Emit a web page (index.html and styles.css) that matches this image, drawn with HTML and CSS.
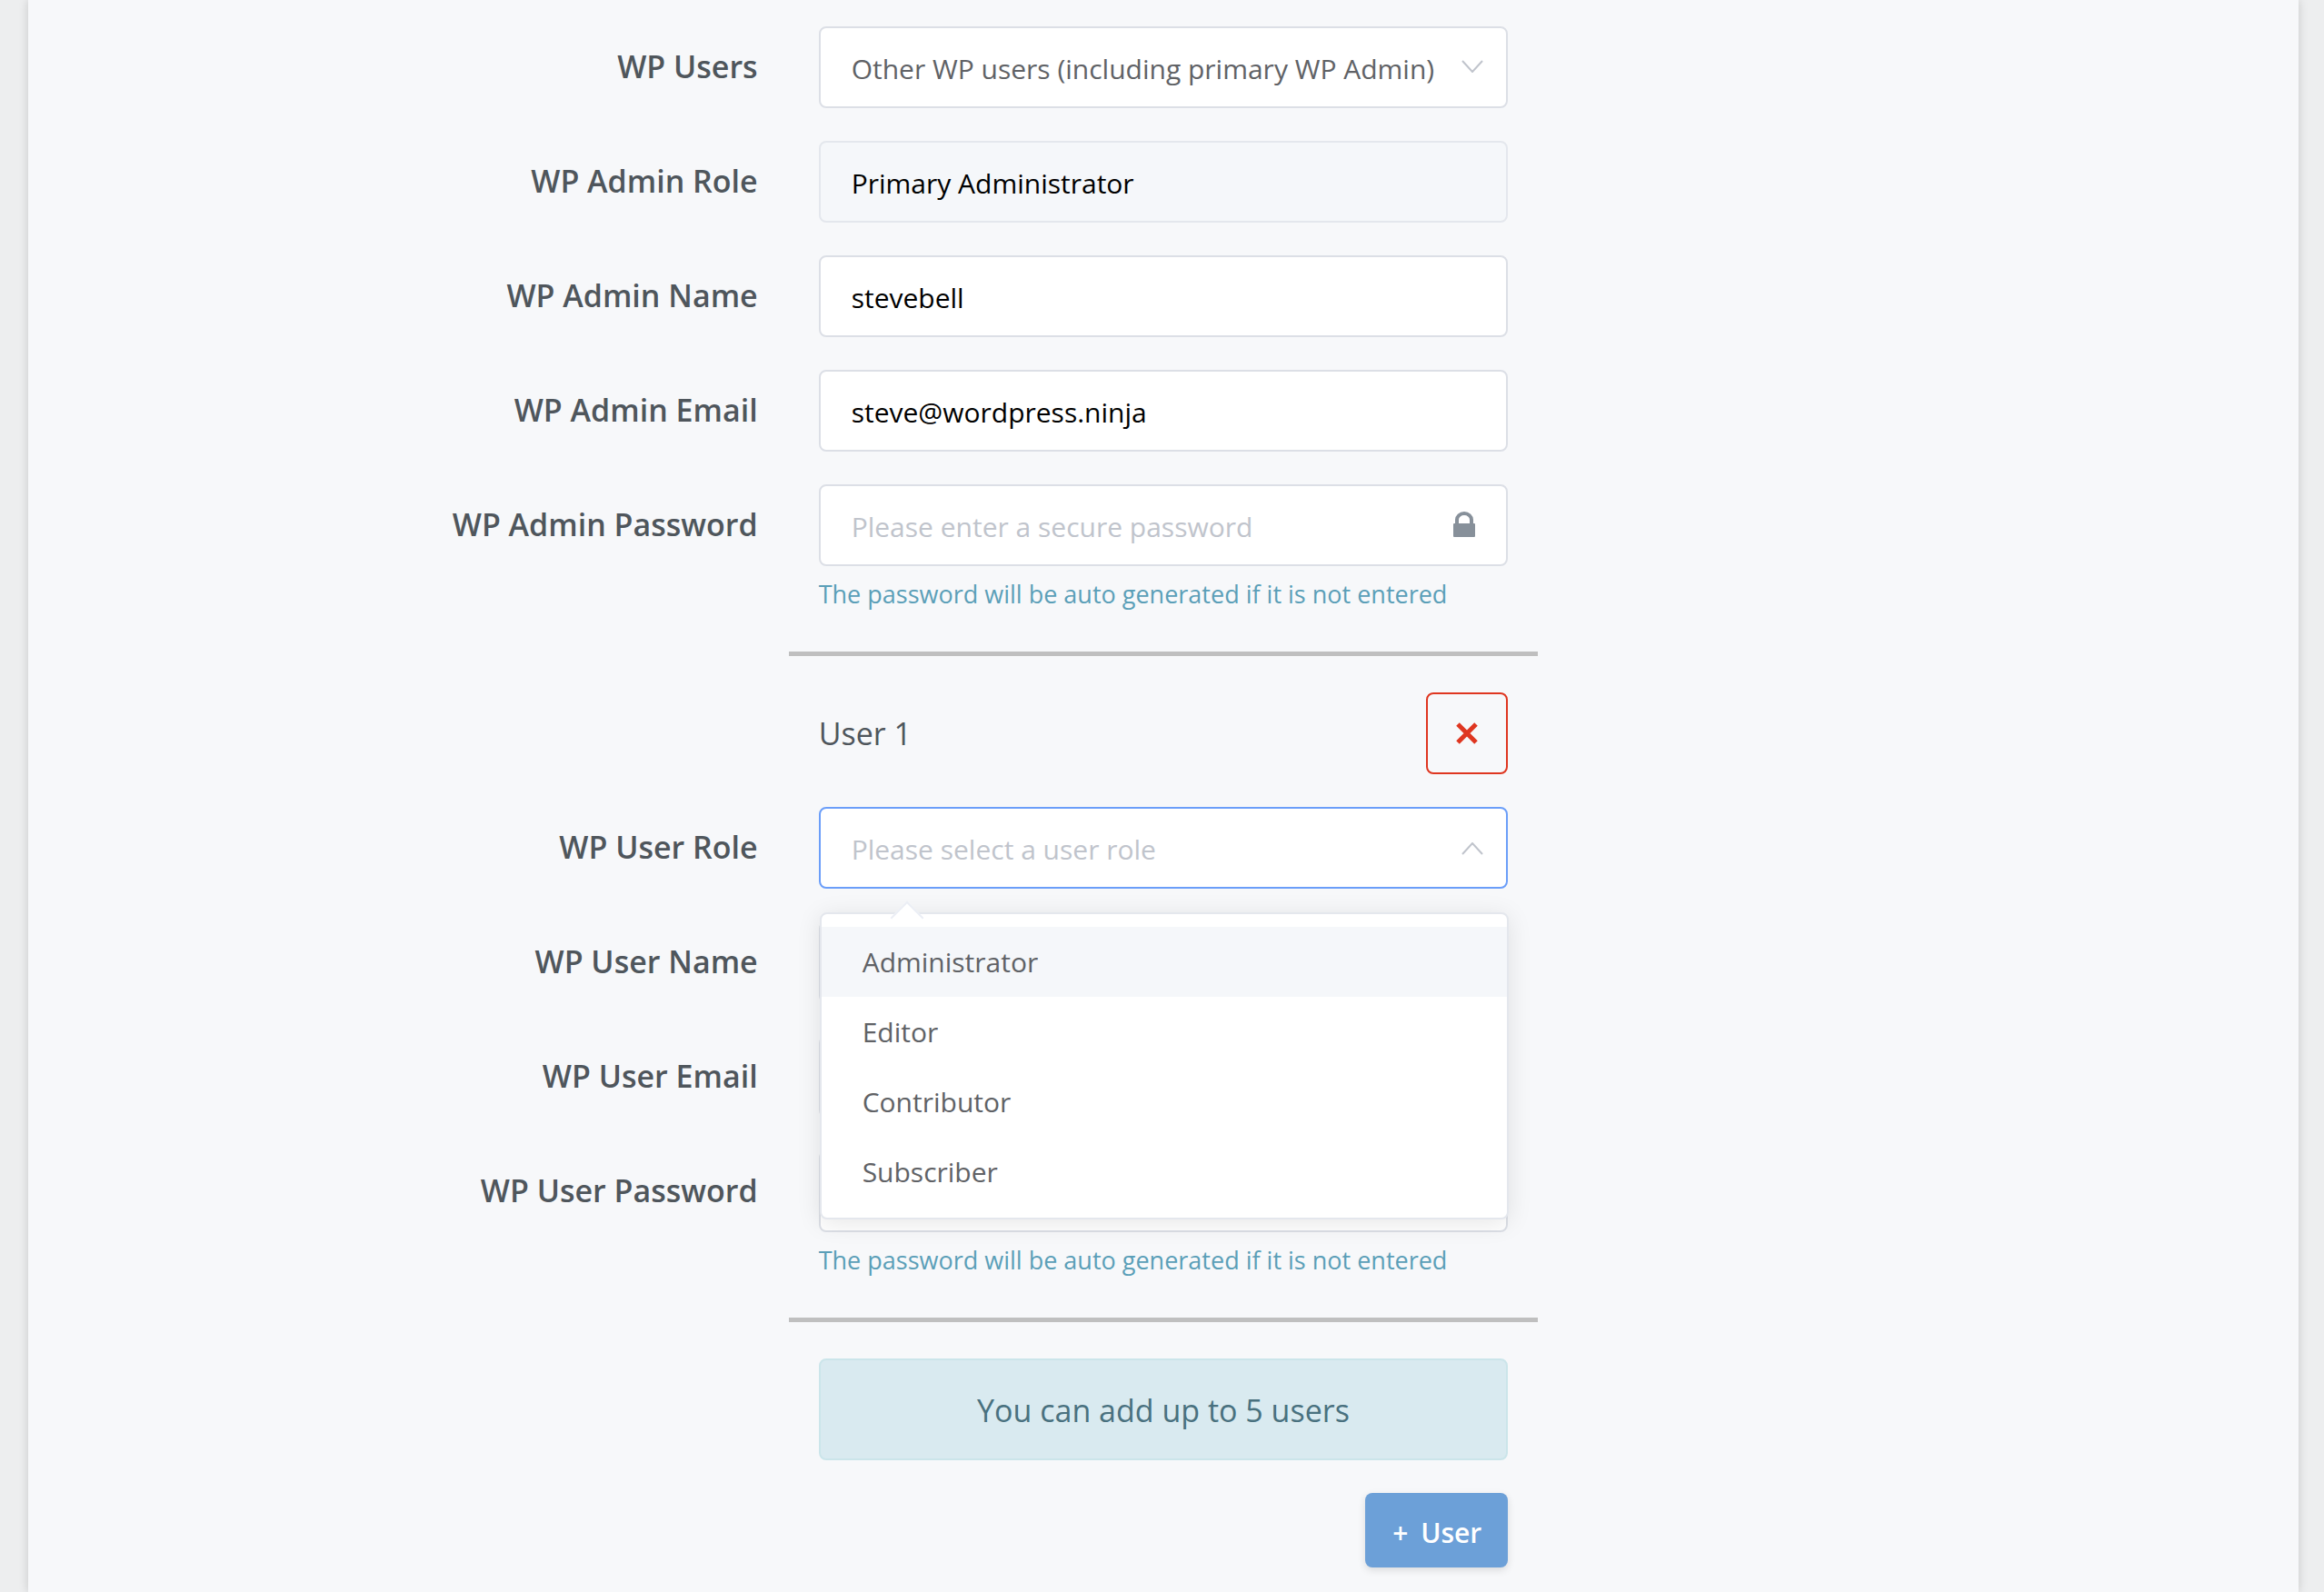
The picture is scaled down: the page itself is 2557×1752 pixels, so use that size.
FILE: index.html
```html
<!DOCTYPE html>
<html lang="en">
<head>
    <meta charset="UTF-8">
    <meta name="viewport" content="width=device-width, initial-scale=1.0">
    <title>WP Users</title>
    <link rel="stylesheet" href="styles.css">
</head>
<body>
    <form class="card">
        <!-- Primary admin -->
        <div class="form-row">
            <label class="form-label" for="wpUsers">WP Users</label>
            <div class="form-field">
                <select class="form-input form-select" id="wpUsers">
                    <option>Other WP users (including primary WP Admin)</option>
                </select>
                <svg class="field-icon chevron" viewBox="0 0 24 14"><path d="M1 1l11 12L23 1"/></svg>
            </div>
        </div>
        <div class="form-row">
            <label class="form-label" for="adminRole">WP Admin Role</label>
            <div class="form-field">
                <input class="form-input" id="adminRole" type="text" value="Primary Administrator" disabled>
            </div>
        </div>
        <div class="form-row">
            <label class="form-label" for="adminName">WP Admin Name</label>
            <div class="form-field">
                <input class="form-input" id="adminName" type="text" value="stevebell">
            </div>
        </div>
        <div class="form-row">
            <label class="form-label" for="adminEmail">WP Admin Email</label>
            <div class="form-field">
                <input class="form-input" id="adminEmail" type="email" value="steve@wordpress.ninja">
            </div>
        </div>
        <div class="form-row with-help">
            <label class="form-label" for="adminPassword">WP Admin Password</label>
            <div class="form-field">
                <input class="form-input" id="adminPassword" type="password" placeholder="Please enter a secure password">
                <svg class="field-icon lock" viewBox="0 0 24 28"><path d="M2 13V9a10 9 0 0 1 20 0v4h1a1 1 0 0 1 1 1v13a1 1 0 0 1-1 1H1a1 1 0 0 1-1-1V14a1 1 0 0 1 1-1zM6 13h12V9a6 5 0 0 0-12 0z"/></svg>
                <p class="help-text">The password will be auto generated if it is not entered</p>
            </div>
        </div>

        <hr class="divider">

        <!-- Additional user -->
        <div class="form-row">
            <div class="form-field user-header">
                <span class="user-title">User 1</span>
                <button class="remove-button" type="button" aria-label="Remove user">
                    <svg viewBox="0 0 24 24"><path d="M2 2l20 20M22 2L2 22"/></svg>
                </button>
            </div>
        </div>
        <div class="form-row">
            <label class="form-label" for="userRole">WP User Role</label>
            <div class="form-field">
                <select class="form-input form-select placeholder open" id="userRole">
                    <option value="">Please select a user role</option>
                    <option>Administrator</option>
                    <option>Editor</option>
                    <option>Contributor</option>
                    <option>Subscriber</option>
                </select>
                <svg class="field-icon chevron" viewBox="0 0 24 14"><path d="M1 13L12 1l11 12"/></svg>
                <ul class="dropdown" role="listbox">
                    <li class="dropdown-item hover" role="option">Administrator</li>
                    <li class="dropdown-item" role="option">Editor</li>
                    <li class="dropdown-item" role="option">Contributor</li>
                    <li class="dropdown-item" role="option">Subscriber</li>
                </ul>
            </div>
        </div>
        <div class="form-row">
            <label class="form-label" for="userName">WP User Name</label>
            <div class="form-field">
                <input class="form-input" id="userName" type="text">
            </div>
        </div>
        <div class="form-row">
            <label class="form-label" for="userEmail">WP User Email</label>
            <div class="form-field">
                <input class="form-input" id="userEmail" type="email">
            </div>
        </div>
        <div class="form-row with-help">
            <label class="form-label" for="userPassword">WP User Password</label>
            <div class="form-field">
                <input class="form-input" id="userPassword" type="password">
                <p class="help-text">The password will be auto generated if it is not entered</p>
            </div>
        </div>

        <hr class="divider">

        <div class="form-row">
            <div class="form-field">
                <div class="alert">You can add up to 5 users</div>
            </div>
        </div>
        <div class="form-row">
            <div class="form-field actions">
                <button class="add-button" type="button"><span class="plus">+</span> User</button>
            </div>
        </div>
    </form>
</body>
</html>
```
FILE: styles.css
```css
* {
    box-sizing: border-box;
}

body {
    margin: 0;
    background-color: #edeeef;
    font-family: "Open Sans", "Noto Sans", sans-serif;
    color: #4f565c;
}

.card {
    min-height: 100vh;
    margin: 0 28px 0 31px;
    padding: 29px 12px 26px;
    background-color: #f7f8fa;
    box-shadow: 0 0 10px rgba(0, 0, 0, 0.16);
}

.form-row {
    display: grid;
    grid-template-columns: 1fr 1fr 1fr;
    margin-bottom: 36px;
}

.form-row:last-child {
    margin-bottom: 0;
}

.form-row.with-help {
    margin-bottom: 28px;
}

.form-label {
    height: 90px;
    padding-right: 34px;
    font-size: 34px;
    font-weight: 600;
    line-height: 88px;
    text-align: right;
}

.form-field {
    grid-column: 2;
    position: relative;
    padding: 0 33px;
}

.form-input {
    display: block;
    width: 100%;
    height: 90px;
    padding: 2px 34px 0;
    border: 2px solid #dcdfe6;
    border-radius: 8px;
    background-color: #fff;
    font-family: inherit;
    font-size: 30px;
    color: #000;
    outline: none;
}

.form-input::placeholder {
    color: #c0c4cc;
}

.form-input:disabled {
    background-color: #f5f7fa;
    border-color: #e4e7ed;
}

.form-select {
    appearance: none;
    padding-right: 56px;
    color: #606266;
}

.form-select.placeholder {
    color: #c0c4cc;
}

.form-select.open {
    border-color: #6b9ef9;
}

.field-icon {
    position: absolute;
    pointer-events: none;
}

.chevron {
    top: 37px;
    right: 60px;
    width: 24px;
    height: 14px;
    fill: none;
    stroke: #c0c4cc;
    stroke-width: 2;
}

.form-select.open + .chevron {
    top: 39px;
}

.lock {
    top: 30px;
    right: 69px;
    width: 24px;
    height: 28px;
    fill: #87909a;
}

.help-text {
    margin: 11px 0 0;
    font-size: 27px;
    line-height: 40px;
    color: #5b9fb8;
}

.divider {
    width: calc(100% / 3);
    height: 5px;
    margin: 43px auto 40px;
    border: none;
    background-color: #bfbfbf;
}

.user-header {
    display: flex;
    align-items: center;
    justify-content: space-between;
}

.user-title {
    font-size: 34px;
}

.remove-button {
    display: flex;
    align-items: center;
    justify-content: center;
    width: 90px;
    height: 90px;
    border: 2px solid #df3620;
    border-radius: 8px;
    background: none;
}

.remove-button svg {
    width: 24px;
    height: 24px;
    stroke: #df3620;
    stroke-width: 5;
}

/* Role menu */
.dropdown {
    position: absolute;
    top: 116px;
    left: 34px;
    right: 32px;
    z-index: 10;
    margin: 0;
    padding: 14px 0 12px;
    border: 2px solid #e4e7ed;
    border-radius: 8px;
    background-color: #fff;
    box-shadow: 0 4px 27px rgba(0, 0, 0, 0.1);
    list-style: none;
}

.dropdown::before {
    content: "";
    position: absolute;
    top: -9px;
    left: 81px;
    width: 24px;
    height: 24px;
    border: 2px solid #ebeef5;
    border-right: none;
    border-bottom: none;
    background-color: #fff;
    transform: rotate(45deg);
}

.dropdown-item {
    position: relative;
    padding: 0 45px;
    font-size: 30px;
    line-height: 77px;
    color: #606266;
}

.dropdown-item.hover {
    background-color: #f5f7fa;
}

.alert {
    padding: 31px 30px 29px;
    border: 2px solid #cbe5ea;
    border-radius: 8px;
    background-color: #d9eaf0;
    font-size: 34px;
    line-height: 48px;
    text-align: center;
    color: #49717f;
}

.actions {
    display: flex;
    justify-content: flex-end;
}

.add-button {
    height: 82px;
    padding: 4px 29px 0 30px;
    border: none;
    border-radius: 8px;
    background-color: #6ca0d8;
    box-shadow: 0 3px 8px rgba(0, 0, 0, 0.12);
    font-family: inherit;
    font-size: 30px;
    font-weight: 600;
    color: #fff;
}

.plus {
    margin-right: 6px;
}
```
